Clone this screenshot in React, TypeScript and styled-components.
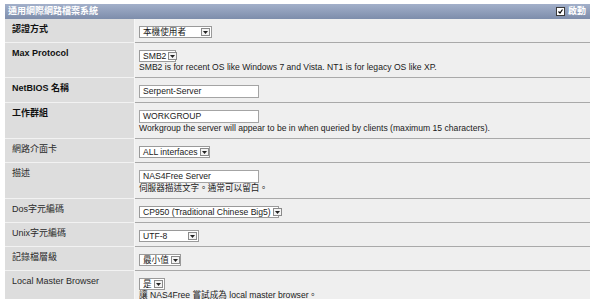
import styled, { createGlobalStyle } from 'styled-components';

const Global = createGlobalStyle`
  body {
    margin: 0;
    background: #ffffff;
    font-family: "Liberation Sans", "Noto Sans CJK TC", sans-serif;
    font-size: 9px;
    color: #1a1a1a;
  }
`;

const rows = [
  { label: '認證方式', bold: true, kind: 'select', value: '本機使用者', width: 73 },
  {
    label: 'Max Protocol', bold: true, kind: 'select', value: 'SMB2', width: 37,
    note: 'SMB2 is for recent OS like Windows 7 and Vista. NT1 is for legacy OS like XP.',
  },
  { label: 'NetBIOS 名稱', bold: true, kind: 'input', value: 'Serpent-Server' },
  {
    label: '工作群組', bold: true, kind: 'input', value: 'WORKGROUP',
    note: 'Workgroup the server will appear to be in when queried by clients (maximum 15 characters).',
  },
  { label: '網路介面卡', kind: 'select', value: 'ALL interfaces', width: 71 },
  { label: '描述', kind: 'input', value: 'NAS4Free Server', note: '伺服器描述文字。通常可以留白。' },
  { label: 'Dos字元編碼', kind: 'select', value: 'CP950 (Traditional Chinese Big5)', width: 140 },
  { label: 'Unix字元編碼', kind: 'select', value: 'UTF-8', width: 60 },
  { label: '記錄檔層級', kind: 'select', value: '最小值', width: 42 },
  {
    label: 'Local Master Browser', kind: 'select', value: '是', width: 26,
    note: '讓 NAS4Free 嘗試成為 local master browser。',
  },
];

const Page = styled.div`
  margin: 4px 10px 0 5px;
`;

const Header = styled.div`
  height: 15px;
  display: flex;
  align-items: center;
  justify-content: space-between;
  padding: 0 4px 0 3px;
  background: linear-gradient(#a3b0ca, #7d8dab);
  color: #ffffff;
  font-weight: bold;
  line-height: 11px;
`;

const Enable = styled.label`
  display: flex;
  align-items: center;
  gap: 3px;
  font-weight: bold;
`;

const Check = styled.span`
  width: 7px;
  height: 7px;
  background: #ffffff;
  border: 1px solid #3a3a3a;
  display: flex;
  align-items: center;
  justify-content: center;
`;

const Row = styled.div`
  display: grid;
  grid-template-columns: 130px 1fr;
`;

const Label = styled.div<{ $bold?: boolean }>`
  background: #dddddd;
  border-right: 1px solid #f6f6f6;
  border-bottom: 1px solid #f2f2f2;
  padding: 5px 7px 3px;
  line-height: 11px;
  font-weight: ${(p) => (p.$bold ? 'bold' : 'normal')};
  color: ${(p) => (p.$bold ? '#111111' : '#2a2a2a')};
`;

const Value = styled.div`
  background: #efefef;
  border-bottom: 1px solid #a9a9a9;
  padding: 7px 5px 4px 4px;
  font-size: 8.6px;
`;

const Select = styled.div<{ $w: number }>`
  width: ${(p) => p.$w}px;
  height: 12px;
  box-sizing: border-box;
  display: flex;
  align-items: center;
  justify-content: space-between;
  background: #ffffff;
  border: 1px solid #9a9a9a;
  padding: 0 1px 0 3px;
  white-space: nowrap;
  line-height: 10px;
`;

const Arrow = styled.span`
  width: 9px;
  height: 8px;
  box-sizing: border-box;
  border: 1px solid #8a8a8a;
  background: #f4f4f4;
  display: flex;
  align-items: center;
  justify-content: center;
  margin-left: 2px;
  flex: none;
`;

const Input = styled.div`
  width: 120px;
  height: 13px;
  box-sizing: border-box;
  background: #ffffff;
  border: 1px solid #a4a4a4;
  padding: 0 3px;
  line-height: 11px;
`;

const Note = styled.div`
  line-height: 11px;
  white-space: nowrap;
`;

export default function App() {
  return (
    <>
      <Global />
      <Page>
        <Header>
          <span>通用網際網路檔案系統</span>
          <Enable>
            <Check>
              <svg width="5" height="5" viewBox="0 0 5 5">
                <path d="M0.5 2.5 L2 4 L4.5 0.5" stroke="#000" strokeWidth="1.2" fill="none" />
              </svg>
            </Check>
            啟動
          </Enable>
        </Header>
        {rows.map((r) => (
          <Row key={r.label}>
            <Label $bold={r.bold}>{r.label}</Label>
            <Value>
              {r.kind === 'select' ? (
                <Select $w={r.width ?? 60}>
                  <span>{r.value}</span>
                  <Arrow>
                    <svg width="5" height="3" viewBox="0 0 5 3">
                      <path d="M0 0 H5 L2.5 3 Z" fill="#222" />
                    </svg>
                  </Arrow>
                </Select>
              ) : (
                <Input>{r.value}</Input>
              )}
              {r.note && <Note>{r.note}</Note>}
            </Value>
          </Row>
        ))}
      </Page>
    </>
  );
}
